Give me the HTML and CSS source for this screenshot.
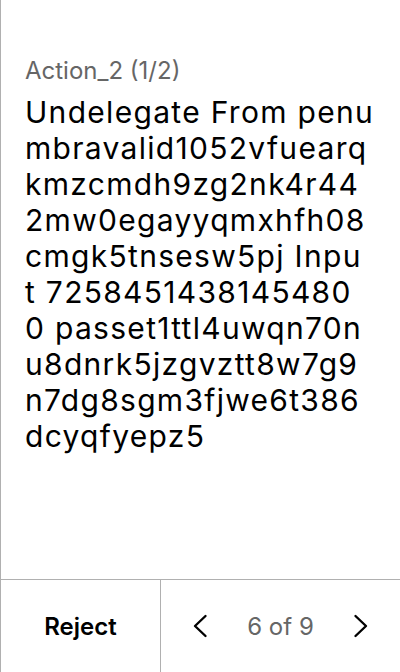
FILE: index.html
```html
<!DOCTYPE html>
<html>
<head>
<meta charset="utf-8">
<link rel="stylesheet" href="styles.css">
</head>
<body>
<div class="screen">
  <main class="content">
    <div class="label">Action_2 (1/2)</div>
    <div class="body">Undelegate From penu<br>mbravalid1052vfuearq<br>kmzcmdh9zg2nk4r44<br>2mw0egayyqmxhfh08<br>cmgk5tnsesw5pj Inpu<br>t 7258451438145480<br>0 passet1ttl4uwqn70n<br>u8dnrk5jzgvztt8w7g9<br>n7dg8sgm3fjwe6t386<br>dcyqfyepz5</div>
  </main>
  <footer class="bar">
    <div class="reject">Reject</div>
    <div class="nav">
      <svg class="chev" width="16" height="24" viewBox="0 0 16 24"><path d="M13.5 2 L3 12 L13.5 22" fill="none" stroke="#000" stroke-width="2.4" stroke-linecap="round" stroke-linejoin="round"/></svg>
      <span class="count">6 of 9</span>
      <svg class="chev" width="16" height="24" viewBox="0 0 16 24"><path d="M2.5 2 L13 12 L2.5 22" fill="none" stroke="#000" stroke-width="2.4" stroke-linecap="round" stroke-linejoin="round"/></svg>
    </div>
  </footer>
</div>
</body>
</html>
```
FILE: styles.css
```css
html, body { margin: 0; padding: 0; background: #fff; }
body { font-family: Inter, "Noto Sans", sans-serif; }
.screen {
  width: 400px; height: 672px; box-sizing: border-box;
  border-left: 1px solid #b0b0b0;
  display: flex; flex-direction: column;
}
.content { flex: 1; padding: 57px 24px 0 24px; }
.label { font-size: 24px; color: #666; line-height: 28px; }
.body {
  margin-top: 9px;
  font-size: 30px; line-height: 36px; color: #000;
  letter-spacing: 1.3px;
  word-break: break-all;
}
.bar {
  height: 92px; border-top: 1px solid #b0b0b0;
  display: flex;
}
.reject {
  width: 159px; border-right: 1px solid #b0b0b0;
  display: flex; align-items: center; justify-content: center;
  font-size: 24px; font-weight: 600; color: #000;
}
.nav {
  flex: 1; display: flex; align-items: center; justify-content: space-between;
  padding: 0 31px 0 31px;
}
.count { font-size: 24px; color: #666; }
```
